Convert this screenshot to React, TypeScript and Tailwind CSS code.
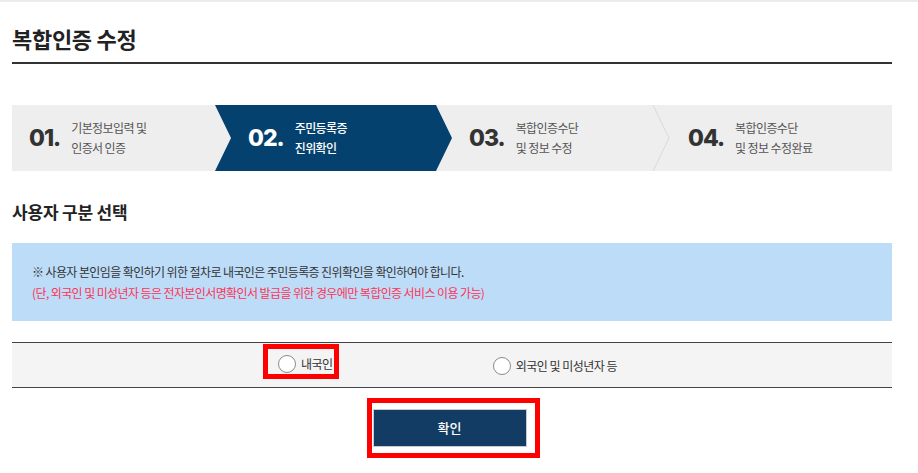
import React from 'react';

const FONT = { fontFamily: '"Noto Sans CJK KR", "Noto Sans", sans-serif' };
const NUM_FONT = { fontFamily: 'Inter, "Noto Sans", sans-serif' };

const STEPS = [
  { no: '01.', lines: ['기본정보입력 및', '인증서 인증'] },
  { no: '02.', lines: ['주민등록증', '진위확인'] },
  { no: '03.', lines: ['복합인증수단', '및 정보 수정'] },
  { no: '04.', lines: ['복합인증수단', '및 정보 수정완료'] },
];

const StepLabel: React.FC<{ no: string; lines: string[]; active?: boolean }> = ({ no, lines, active }) => (
  <div className="flex items-center gap-[11px]">
    <span
      className={`text-[23px] font-extrabold tracking-[-1px] ${active ? 'text-white' : 'text-[#333]'}`}
      style={NUM_FONT}
    >
      {no}
    </span>
    <div className={`text-[12px] leading-[20px] tracking-[-0.6px] ${active ? 'text-white font-medium' : 'text-[#555]'}`}>
      {lines.map((l) => (
        <div key={l}>{l}</div>
      ))}
    </div>
  </div>
);

const Radio: React.FC<{ label: string }> = ({ label }) => (
  <span className="flex items-center gap-[5px]">
    <span className="w-[18px] h-[18px] rounded-full border border-[#8a8a8a] bg-white" />
    <span className="text-[12px] text-[#333] tracking-[-0.5px]">{label}</span>
  </span>
);

export default function App() {
  return (
    <div className="w-[918px] h-[473px] bg-white border-t-2 border-[#ebebeb] overflow-hidden" style={FONT}>
      <div className="w-[880px] ml-[12px]">
        {/* Title */}
        <h1 className="pt-[20px] h-[60px] text-[22px] font-bold text-[#222] tracking-[-0.3px]">복합인증 수정</h1>
        <div className="h-[2px] bg-[#333]" />

        {/* Steps */}
        <div className="mt-[41px] h-[66px] bg-[#eeeeee] flex">
          <div className="w-[203px] shrink-0 pl-[17px] flex items-center">
            <StepLabel {...STEPS[0]} />
          </div>
          <div className="w-[237px] shrink-0 pl-[33px] flex items-center bg-[#04416f] [clip-path:polygon(0_0,221px_0,237px_50%,221px_100%,0_100%,16px_50%)]">
            <StepLabel {...STEPS[1]} active />
          </div>
          <div className="w-[220px] shrink-0 pl-[17px] flex items-center justify-between">
            <StepLabel {...STEPS[2]} />
            <svg width="18" height="66" viewBox="0 0 18 66" className="mr-[2px]">
              <polyline points="1,0 17,33 1,66" fill="none" stroke="#d9d9d9" strokeWidth="1" />
            </svg>
          </div>
          <div className="flex-1 pl-[16px] flex items-center">
            <StepLabel {...STEPS[3]} />
          </div>
        </div>

        {/* Section */}
        <h2 className="mt-[28px] text-[17px] font-bold text-[#222] tracking-[-0.2px]">사용자 구분 선택</h2>

        <div className="mt-[18px] h-[78px] bg-[#bcdcf8] pl-[20px] pt-[18px] text-[12px] leading-[21px] tracking-[-0.6px]">
          <p className="text-[#333]">※ 사용자 본인임을 확인하기 위한 절차로 내국인은 주민등록증 진위확인을 확인하여야 합니다.</p>
          <p className="text-[#ff3355]">(단, 외국인 및 미성년자 등은 전자본인서명확인서 발급을 위한 경우에만 복합인증 서비스 이용 가능)</p>
        </div>

        {/* Radios */}
        <div className="mt-[21px] h-[46px] border-y border-[#444] bg-[#f4f4f4] flex justify-start items-start pl-[251px] gap-[154px]">
          <span className="mt-[1px] h-[35px] border-[5px] border-[#ff0000] pl-[10px] pr-[1px] pt-[6px] flex items-center">
            <Radio label="내국인" />
          </span>
          <span className="h-[44px] pt-[2px] flex items-center">
            <Radio label="외국인 및 미성년자 등" />
          </span>
        </div>

        {/* Button */}
        <div className="mt-[10px] flex justify-center pl-[2px]">
          <div className="border-[5px] border-[#ff0000] pl-[1px] pr-[8px] pt-[6px] pb-[6px]">
            <button className="w-[154px] h-[38px] bg-[#123c63] border border-[#c5cbd2] text-white text-[13px] font-medium">
              확인
            </button>
          </div>
        </div>
      </div>
    </div>
  );
}
